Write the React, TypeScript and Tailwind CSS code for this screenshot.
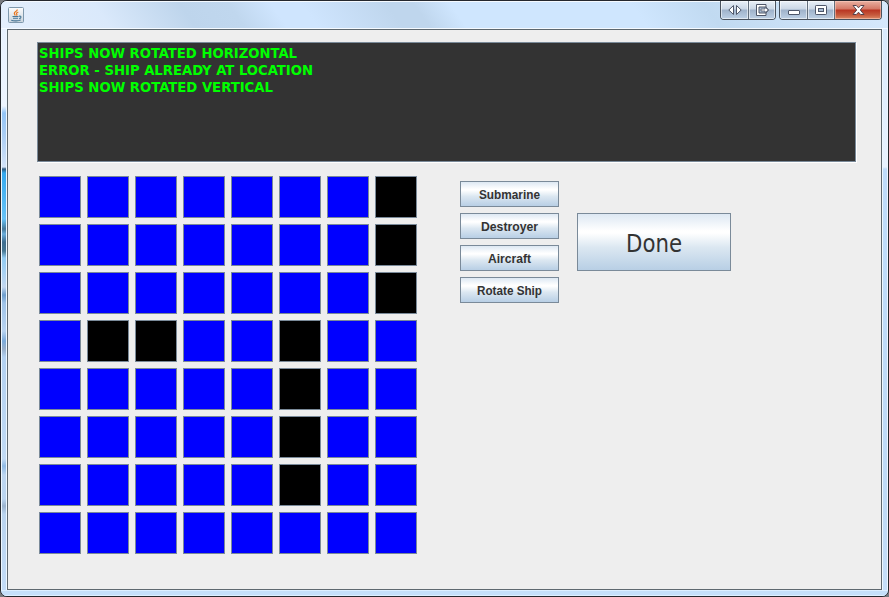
import React from "react";

const SHIPS = new Set(["0-7", "1-7", "2-7", "3-1", "3-2", "3-5", "4-5", "5-5", "6-5"]);

const LOG = [
  { text: "SHIPS NOW ROTATED HORIZONTAL", width: 258 },
  { text: "ERROR - SHIP ALREADY AT LOCATION", width: 274 },
  { text: "SHIPS NOW ROTATED VERTICAL", width: 234 },
];

const ACTIONS = [
  { label: "Submarine", width: 61 },
  { label: "Destroyer", width: 57 },
  { label: "Aircraft", width: 43 },
  { label: "Rotate Ship", width: 65 },
];

// One line of real text, fitted to a fixed advance width.
function FitText({ text, width, height, baseline, className }: {
  text: string;
  width: number;
  height: number;
  baseline: number;
  className: string;
}) {
  return (
    <svg width={width} height={height} className={"block shrink-0 overflow-visible " + className}>
      <text x="0" y={baseline} textLength={width} lengthAdjust="spacingAndGlyphs" fill="currentColor">
        {text}
      </text>
    </svg>
  );
}

function JavaIcon() {
  return (
    <svg width="16" height="16" viewBox="0 0 16 16" className="block">
      <defs>
        <linearGradient id="java" x1="0" y1="0" x2="0" y2="1">
          <stop offset="0" stopColor="#fdfdfd" />
          <stop offset="1" stopColor="#c9d4dd" />
        </linearGradient>
      </defs>
      <rect x=".5" y=".5" width="15" height="15" rx="1" fill="url(#java)" stroke="#7f99ad" />
      <path d="M9.3 2.500C9.500 4.300 6 4.800 6.300 6.500c.1.800.8 1.200 1 2M10.300 5C8.300 5.800 8.100 6.500 8.800 7.300c.3.400.1.900-.3 1.300" fill="none" stroke="#e8761f" strokeWidth="1.200" />
      <path d="M4.500 9.500h6M5 11.300h5M11 9.300c2.600-.8 2.600 1.700.2 2.300M3.300 13.200c2 1 7.600 1 9.400-.3" fill="none" stroke="#487797" strokeWidth="1.100" />
    </svg>
  );
}

function Controls() {
  const plain = "h-[18px] border-r border-[#626e7c] bg-[linear-gradient(180deg,#e9f0f8_0px,#cbd7e6_8px,#9fb2ca_9px,#bdd0e5_18px)] shadow-[inset_0_0_0_1px_rgba(255,255,255,0.55)] flex items-center justify-center";
  const frame = "flex h-[19px] overflow-hidden rounded-b-[4px] border border-t-0 border-[#49525e]";
  return (
    <div className="flex h-[19px] gap-[3px]">
      <div className={frame}>
        <div className={plain + " w-[28px]"}>
          <svg width="14" height="12" viewBox="0 0 14 12">
            <path d="M5.500 1.500v9L.8 6zM8.500 1.500v9L13.200 6z" fill="#fff" stroke="#4e5669" />
          </svg>
        </div>
        <div className={plain + " w-[26px] border-r-0"}>
          <svg width="13" height="12" viewBox="0 0 13 12">
            <path d="M.5 .5h9.500v2.500L12.500 6 10 9v2.500H.5z" fill="#fff" stroke="#4e5669" />
            <path d="M10 3H3v6h7" fill="#a9bbd2" stroke="#4e5669" />
            <path d="M5 5h4V3.300L12.300 6 9 8.700V7H5z" fill="#fff" stroke="#4e5669" strokeWidth=".8" />
          </svg>
        </div>
      </div>
      <div className={frame}>
        <div className={plain + " w-[28px]"}>
          <svg width="14" height="12" viewBox="0 0 14 12">
            <rect x="1.500" y="6.500" width="11" height="4" rx=".5" fill="#fff" stroke="#4e5669" />
          </svg>
        </div>
        <div className={plain + " w-[27px]"}>
          <svg width="12" height="10" viewBox="0 0 12 10">
            <rect x=".5" y=".5" width="11" height="9" rx=".7" fill="#fff" stroke="#4e5669" />
            <rect x="3.500" y="3.500" width="5" height="3" fill="#a9bbd2" stroke="#4e5669" />
          </svg>
        </div>
        <div className="flex h-[18px] w-[46px] items-center justify-center bg-[linear-gradient(180deg,#e9b0a1_0px,#d47866_8px,#b93522_9px,#c65a3d_14px,#dc8a65_18px)] shadow-[inset_0_0_0_1px_rgba(255,210,195,0.55)]">
          <svg width="13" height="12" viewBox="0 0 13 12">
            <path d="M1 1.500h3.300l2.200 2.300 2.200-2.300H12L8.300 6l3.700 4.500H8.700L6.500 8.200l-2.200 2.300H1L4.700 6z" fill="#fff" stroke="#56424b" />
          </svg>
        </div>
      </div>
    </div>
  );
}

export default function App() {
  return (
    <div className="h-[597px] w-[889px] overflow-hidden bg-[#77797d]">
      <div className="flex h-full w-full flex-col overflow-hidden rounded-[7px] border border-[#25282e] bg-[#cfe6fe]">
        <header className="flex h-[28px] shrink-0 items-start justify-between border-y border-[#f5faff] bg-[linear-gradient(55deg,#e4effc_0px,#dae9fb_90px,#bed5ec_160px,#c0d7ee_200px,#cfe5fe_235px,#cfe5fe_260px,#bfd6ed_330px,#bfd6ed_352px,#cfe6fe_382px,#cfe6fe_530px,#c1daf1_590px,#d7e9fc_740px)] pl-[7px]">
          <div className="pt-[5px]"><JavaIcon /></div>
          <div className="mt-[-1px] pr-[6px]"><Controls /></div>
        </header>
        <div className="flex min-h-0 flex-1">
          <div className="w-[6px] shrink-0 border-x border-x-[#edf7ff] bg-[linear-gradient(180deg,#e7f1fe_0px,#edf5ff_77px,#93c5f7_84px,#a9cdf4_105px,#d3e3f8_138px,#315b7e_140px,#35a9ee_144px,#67c2f6_190px,#477999_200px,#6aaddb_205px,#3e6d90_213px,#477793_222px,#91cbf2_229px,#abd2f3_245px,#c3d7ef_258px,#6d9dcc_266px,#9fc3e8_274px,#b9d4f1_302px,#7baada_312px,#99b0cb_320px,#b3d1f1_328px,#c1daf4_430px,#8fbae5_437px,#bdd6f1_446px,#bbd5f0_470px,#9bb3ce_477px,#bad4ef_485px,#c3dcf7_567px)]" />
          <main className="h-[561px] w-[875px] shrink-0 border border-[#5e686f] bg-[#eeeeee] pl-[29px] pt-[12px]">
            <section className="h-[120px] w-[819px] border border-[#7a8a99] bg-[#333333] pl-px pt-[2px] shadow-[1px_1px_0_#ffffff]">
              {LOG.map((l) => (
                <FitText key={l.text} text={l.text} width={l.width} height={17} baseline={13} className="font-['DejaVu_Sans_Condensed','DejaVu_Sans',sans-serif] text-[14px] font-bold text-[#00ff00]" />
              ))}
            </section>
            <div className="flex pl-[2px] pt-[14px]">
              <div className="grid grid-cols-[repeat(8,42px)] gap-[6px]">
                {Array.from({ length: 64 }, (_, i) => (
                  <button
                    key={i}
                    aria-label={`Row ${Math.floor(i / 8) + 1}, column ${(i % 8) + 1}`}
                    className={"h-[42px] w-[42px] border border-[#7a8a99] " + (SHIPS.has(`${Math.floor(i / 8)}-${i % 8}`) ? "bg-black" : "bg-[#0000ff]")}
                  />
                ))}
              </div>
              <div className="ml-[43px] mt-[5px] flex flex-col gap-[6px]">
                {ACTIONS.map((a) => (
                  <button key={a.label} className="flex h-[26px] w-[99px] items-center justify-center border border-[#7a8a99] bg-[linear-gradient(180deg,#dde8f3_0%,#ffffff_30%,#ffffff_34%,#dbe7f1_60%,#b8cfe5_100%)]">
                    <FitText text={a.label} width={a.width} height={16} baseline={13} className="font-['Liberation_Sans',Arial,sans-serif] text-[12px] font-bold text-[#333333]" />
                  </button>
                ))}
              </div>
              <button className="ml-[18px] mt-[37px] flex h-[58px] w-[154px] items-center justify-center border border-[#7a8a99] bg-[linear-gradient(180deg,#dde8f3_0%,#ffffff_30%,#ffffff_34%,#dbe7f1_60%,#b8cfe5_100%)]">
                <FitText text="Done" width={56} height={30} baseline={25} className="font-['DejaVu_Sans_Condensed','DejaVu_Sans',sans-serif] text-[24px] text-[#333333]" />
              </button>
            </div>
          </main>
          <div className="w-[6px] shrink-0 border-x border-[#edf7ff] bg-[linear-gradient(180deg,#d8eafd_0px,#e8f2ff_138px,#bfdcfb_140px,#bfdaf6_480px,#c5def9_561px)]" />
        </div>
        <div className="h-[6px] shrink-0 border-y border-[#ddefff] bg-[#c5dff9]" />
      </div>
    </div>
  );
}
